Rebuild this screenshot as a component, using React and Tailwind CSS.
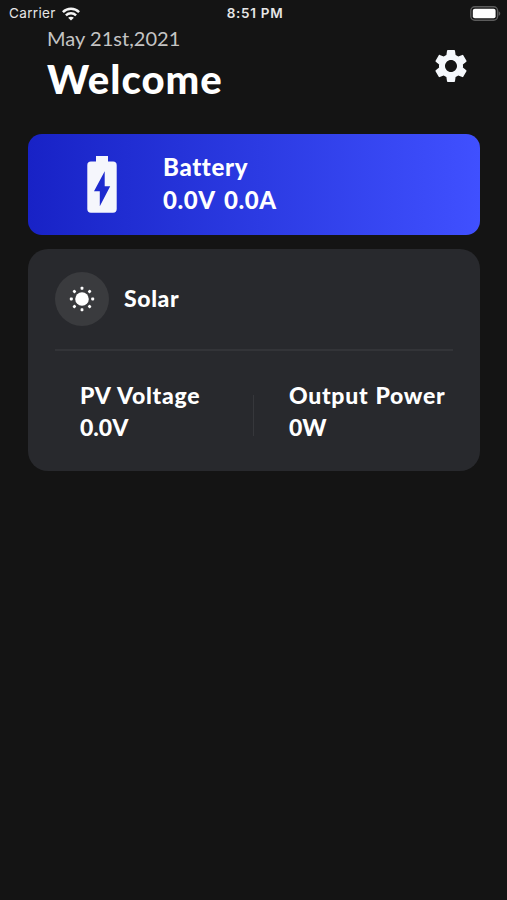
import { MdSettings } from 'react-icons/md'

function WifiIcon() {
  return (
    <svg width="18" height="14" viewBox="0 0 18 14" fill="none" stroke="#f4f4f4" strokeWidth="2.5">
      <path d="M0.9 5.1C5.4 0.7 12.6 0.7 17.1 5.1" />
      <path d="M3.9 8.3C6.8 5.6 11.2 5.6 14.1 8.3" />
      <path d="M9 13.6L6.1 10.7C7.7 9.3 10.3 9.3 11.9 10.7Z" fill="#f4f4f4" stroke="none" />
    </svg>
  )
}

function PhoneBatteryIcon() {
  return (
    <svg width="31" height="15" viewBox="0 0 31 15">
      <rect x="0.8" y="0.8" width="26.8" height="13.4" rx="4" fill="none" stroke="#5c5c5c" strokeWidth="1.4" />
      <rect x="2.8" y="2.8" width="22.8" height="9.4" rx="2" fill="#fff" />
      <path d="M28.6 5.2C30.8 6 30.8 9 28.6 9.8Z" fill="#5c5c5c" />
    </svg>
  )
}

function BatteryIcon() {
  return (
    <svg width="30" height="58" viewBox="0 0 30 58">
      <path
        fill="#f5f6fc"
        fillRule="evenodd"
        d="M9 0H21V5.5H26A3.7 3.7 0 0 1 29.7 9.2V53A3.7 3.7 0 0 1 26 56.7H4A3.7 3.7 0 0 1 0.3 53V9.2A3.7 3.7 0 0 1 4 5.5H9ZM17.7 15.3L7 35.3H12.8V50.3L23.2 30.3H17.7Z"
      />
    </svg>
  )
}

function SunIcon() {
  return (
    <svg width="26" height="26" viewBox="-13 -13 26 26" fill="#fff">
      <circle r="6.8" />
      {[0, 45, 90, 135, 180, 225, 270, 315].map(angle => (
        <rect key={angle} x="-1.4" y="-12.2" width="2.8" height="3" rx="0.8" transform={`rotate(${angle})`} />
      ))}
    </svg>
  )
}

function StatusBar() {
  return (
    <div className="grid h-[27px] grid-cols-3 items-center pl-[9px] pr-[6px] font-['Inter',sans-serif] text-[13.5px] leading-none text-[#e6e6e6]">
      <div className="flex items-center gap-[6px]">
        <span className="pt-px tracking-[0.35px]">Carrier</span>
        <WifiIcon />
      </div>
      <span className="pt-px text-center font-semibold tracking-[0.7px]">8:51 PM</span>
      <div className="flex justify-end">
        <PhoneBatteryIcon />
      </div>
    </div>
  )
}

function Stat({ label, value }) {
  return (
    <div>
      <p className="tracking-[0.7px] [word-spacing:1px]">{label}</p>
      <p className="mt-px">{value}</p>
    </div>
  )
}

export default function App() {
  return (
    <div className="min-h-screen bg-[#141414] font-['Lato',sans-serif] text-white">
      <StatusBar />

      <header className="flex justify-between pl-[47px] pr-[36px]">
        <div>
          <p className="-mt-px text-[20px] leading-6 tracking-[0.04px] text-[#c4c4c4]">May 21st,2021</p>
          <h1 className="mt-[5px] text-[40px] font-black leading-[48px] tracking-[1px]">Welcome</h1>
        </div>
        <MdSettings className="mt-[19px] size-10 text-[#f5f8fc]" />
      </header>

      <main className="pl-7 pr-[27px] pt-[31px]">
        <section className="flex h-[101px] items-center rounded-[14px] bg-linear-to-r from-[#1822c6] to-[#4050ff] pl-[59px]">
          <BatteryIcon />
          <div className="-mt-[2px] ml-[46px] text-[24px] font-black leading-[32px]">
            <p className="tracking-[0.65px]">Battery</p>
            <p className="mt-px tracking-[0.55px] [word-spacing:3px]">0.0V 0.0A</p>
          </div>
        </section>

        <section className="mt-[14px] h-[222px] rounded-[20px] bg-[#28292d] px-[27px] pt-[23px]">
          <div className="flex items-center gap-[15px]">
            <div className="flex size-[54px] items-center justify-center rounded-full bg-[#3a3b3e]">
              <SunIcon />
            </div>
            <h2 className="-mt-0.5 text-[23px] font-black leading-8 tracking-[0.6px]">Solar</h2>
          </div>
          <hr className="mt-[23px] border-t-2 border-[#333438]" />
          <div className="mt-[29px] flex text-[23px] font-black leading-[31px]">
            <div className="w-[198px] pl-[25px]">
              <Stat label="PV Voltage" value="0.0V" />
            </div>
            <div className="mt-[15px] h-[41px] w-px bg-[#36373b]" />
            <div className="pl-[35px]">
              <Stat label="Output Power" value="0W" />
            </div>
          </div>
        </section>
      </main>
    </div>
  )
}
